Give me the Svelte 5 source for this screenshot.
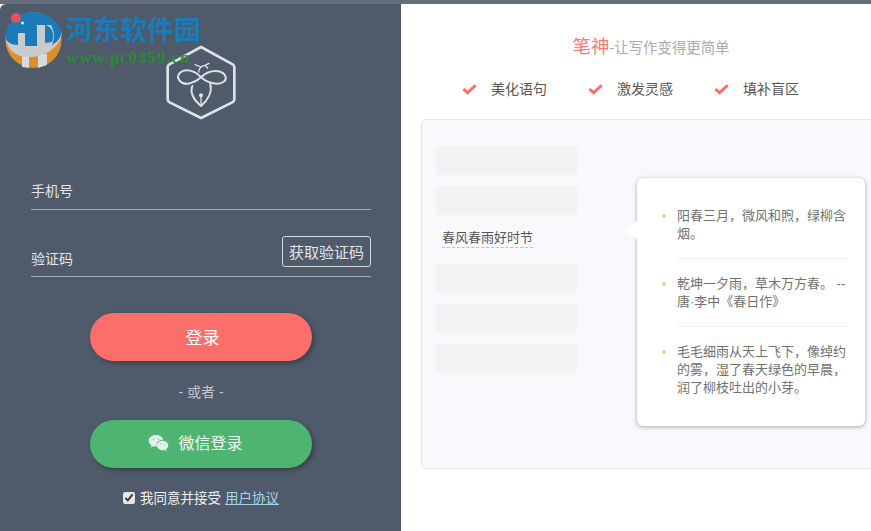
<script>
const features = ['美化语句', '激发灵感', '填补盲区'];
const rows = [
  { text: '' },
  { text: '' },
  { text: '春风春雨好时节' },
  { text: '' },
  { text: '' },
  { text: '' }
];
const tips = [
  '阳春三月，微风和煦，绿柳含烟。',
  '乾坤一夕雨，草木万方春。 --唐·李中《春日作》',
  '毛毛细雨从天上飞下，像绰约的雾，湿了春天绿色的早晨，润了柳枝吐出的小芽。'
];
</script>

<div class="page">
  <section class="login">
    <svg class="logo" viewBox="0 0 216 240" width="72" height="80" fill="none" stroke="#dfe1e4" stroke-linejoin="round" stroke-linecap="round">
      <path d="M108 15 L203 67 Q208 70 208 76 V172 Q208 178 202 181 L108 228 L14 181 Q8 178 8 172 V76 Q8 70 13 67 Z" stroke-width="8"/>
      <path d="M108 106 C90 85 60 78 45 92 C30 108 48 128 70 125 C85 122 98 115 108 106 C120 95 140 85 160 88 C180 92 190 110 175 120 C160 130 130 125 108 106 Z" stroke-width="6"/>
      <path d="M82 132 C75 150 85 172 108 192 C128 175 142 150 136 125" stroke-width="6"/>
      <path d="M108 162 V190" stroke-width="4"/>
      <circle cx="108" cy="160" r="6" fill="#dfe1e4" stroke="none"/>
      <path d="M101 90 C102 78 108 72 120 70 L132 64 M108 75 L90 68 M120 70 L128 78" stroke-width="4"/>
    </svg>

    <div class="field first"><span>手机号</span></div>
    <div class="field second">
      <span>验证码</span>
      <button class="code">获取验证码</button>
    </div>

    <button class="pill red">登录</button>
    <div class="or">- 或者 -</div>
    <button class="pill green">
      <svg viewBox="0 0 22 19" width="21" height="18" fill="#e4f1e8">
        <path d="M8.500 1C4 1 .6 3.800.6 7.200c0 2 1.100 3.600 3 4.800l-.8 2.300 2.700-1.400c1 .3 1.900.4 3 .4h.7a5.400 5.400 0 0 1-.2-1.500c0-3.200 2.900-5.700 6.500-5.700h.7C15.500 3.100 12.400 1 8.500 1z"/>
        <path d="M21.400 12.200c0-2.800-2.800-5-6-5s-6 2.200-6 5 2.800 5 6 5c.7 0 1.400-.1 2-.3l2.100 1.100-.6-1.800c1.500-1 2.500-2.400 2.500-4z"/>
        <g fill="#a5d8b6"><circle cx="5.800" cy="5.300" r="1"/><circle cx="11" cy="5.300" r="1"/><circle cx="13.300" cy="10.800" r=".8"/><circle cx="17.500" cy="10.800" r=".8"/></g>
      </svg>
      微信登录
    </button>
    <label class="agree">
      <input type="checkbox" checked />
      <span>我同意并接受</span> <a href="#agreement">用户协议</a>
    </label>
  </section>

  <section class="intro">
    <h1><em>笔神</em>-让写作变得更简单</h1>
    <ul class="features">
      {#each features as f}
        <li>
          <svg viewBox="0 0 16 12" width="15" height="12"><path d="M1.500 6 L6 10 L14.500 2" fill="none" stroke="#fb6e69" stroke-width="3.200"/></svg>
          {f}
        </li>
      {/each}
    </ul>

    <div class="demo">
      <div class="lines">
        {#each rows as r}
          {#if r.text}
            <div class="line-text"><span>{r.text}</span></div>
          {:else}
            <div class="line"></div>
          {/if}
        {/each}
      </div>
      <div class="pop">
        <ul>
          {#each tips as t}
            <li>{t}</li>
          {/each}
        </ul>
      </div>
    </div>
  </section>

  <div class="mark">
    <svg viewBox="0 0 58 56" width="58" height="56">
      <circle cx="28.500" cy="28" r="28" fill="#dd9029"/>
      <path d="M17 44 H24 V56 L17 55 Z M33 42 H42 V53 L33 56 Z" fill="#d8dade"/>
      <path d="M.6 26 C2 40 14 46 26 45 C42 44 56 34 56.800 21 L40 6 L8 12 Z" fill="#c9cbcf"/>
      <path d="M.6 27 C0 12 12 0 28.500 0 C42 0 53 9 56.500 20 C56 26 52 30 47 33 C50 26 49 18 46 13 L40 13 V33 H32 V13 L20 21 H13 V33 C6 33 3 30 .6 27 Z" fill="#1b7ab8"/>
      <path d="M40 13 C46 14 50 20 47 30 L40 31 Z" fill="#1b7ab8"/>
      <path d="M13 21 L20 21 L20 34 L13 34 Z" fill="#c9cbcf"/>
      <path d="M32 13 L40 13 L40 34 L32 34 Z" fill="#c9cbcf"/>
      <path d="M20 20 L27 14 L32 14 V34 L20 34 Z" fill="#1b7ab8"/>
      <circle cx="11" cy="6" r="5" fill="#e0525d"/>
      <circle cx="17.500" cy="11" r="1.500" fill="#e8e8ee"/>
    </svg>
    <div>
      <strong>河东软件园</strong>
      <small>www.pc0359.cn</small>
    </div>
  </div>
</div>

<style>
:global(body) { margin: 0; background: #fff; }
.page {
  position: relative;
  width: 871px;
  height: 531px;
  overflow: hidden;
  display: flex;
  box-sizing: border-box;
  border-top: 4px solid #666e7b;
  font-family: "Liberation Sans", "Noto Sans CJK SC", sans-serif;
}
.login {
  width: 401px;
  flex: none;
  box-sizing: border-box;
  background: #4f5a6a;
  border-top-left-radius: 6px;
  padding: 38px 30px 0 31px;
  display: flex;
  flex-direction: column;
  align-items: center;
  color: #e3e4e7;
  font-size: 14px;
}
.logo { flex: none; }
.field {
  align-self: stretch;
  box-sizing: border-box;
  border-bottom: 1px solid #a5abb3;
  display: flex;
  justify-content: space-between;
  align-items: flex-end;
}
.field span { line-height: 20px; }
.first { margin-top: 50px; height: 38px; padding-bottom: 8px; }
.second { margin-top: 27px; height: 40px; padding-bottom: 7px; }
.second .code { margin-bottom: 2px; }
.code {
  font: inherit;
  font-size: 15px;
  color: #e3e4e7;
  background: transparent;
  border: 1px solid #d5d8dc;
  border-radius: 3px;
  width: 89px;
  height: 31px;
  padding: 0;
}
.pill {
  width: 222px;
  height: 48px;
  flex: none;
  border: 0;
  border-radius: 24px;
  font: inherit;
  font-size: 16px;
  color: #fff;
  box-shadow: 2px 2px 4px rgba(30, 30, 30, 0.45);
  display: flex;
  align-items: center;
  justify-content: center;
  gap: 9px;
}
.red { background: #fb6e69; margin-top: 36px; padding: 0 0 2px 3px; font-size: 17px; }
.green { background: #4db571; color: #eef8f1; padding: 0 11px 5px 0; }
.green svg { margin-top: 3px; }
.or { margin: 21px 0 18px; font-size: 14px; line-height: 20px; color: #c3c6cb; }
.agree {
  margin-top: 21px;
  display: flex;
  align-items: center;
  font-size: 13.500px;
  color: #f1f2f3;
  gap: 4px;
  line-height: 20px;
}
.agree input { margin: 0 1px 3px 0; width: 12px; height: 12px; accent-color: #e6e6e6; }
.agree a { color: #a5d6ea; }
.intro {
  flex: 1;
  min-width: 0;
  padding: 28px 0 0 20px;
  color: #555;
}
h1 {
  margin: 0;
  text-align: center;
  font-weight: 400;
  font-size: 14.400px;
  color: #aaa;
  padding-left: 10px;
  line-height: 30px;
}
h1 em { font-style: normal; font-size: 18.500px; color: #fb7a75; }
.features {
  list-style: none;
  margin: 16px 0 0 41px;
  padding: 0;
  display: flex;
  font-size: 14px;
  line-height: 20px;
}
.features li { width: 126px; display: flex; align-items: center; gap: 14px; }
.demo {
  margin-top: 20px;
  width: 480px;
  height: 350px;
  box-sizing: border-box;
  background: #f9f9fd;
  border: 1px solid #e6e6ea;
  border-radius: 6px;
  padding: 26px 0 0 14px;
  display: flex;
  align-items: flex-start;
}
.lines { width: 141px; display: flex; flex-direction: column; gap: 11px; flex: none; }
.line { height: 29px; background: #f3f3f4; }
.line-text { height: 27px; padding-left: 6px; font-size: 13px; color: #555; }
.line-text span {
  display: inline-block;
  margin-top: 2px;
  line-height: 19px;
  border-bottom: 1px dashed #8fd6ca;
}
.pop {
  position: relative;
  margin: 32px 0 0 60px;
  width: 228px;
  height: 248px;
  box-sizing: border-box;
  background: #fff;
  border-radius: 6px;
  box-shadow: 0 1px 4px rgba(90, 90, 100, 0.55);
  padding: 29px 17px 0 40px;
}
.pop::before {
  content: "";
  position: absolute;
  left: -14px;
  top: 43px;
  border-style: solid;
  border-width: 9px 14px 9px 0;
  border-color: transparent #fff transparent transparent;
}
.pop ul { list-style: none; margin: 0; padding: 0; }
.pop li {
  position: relative;
  font-size: 13px;
  line-height: 18px;
  color: #717171;
  padding-bottom: 15px;
  margin-bottom: 16px;
  border-bottom: 1px solid #f0f0f0;
}
.pop li:last-child { border-bottom: 0; }
.pop li::before {
  content: "";
  position: absolute;
  left: -15px;
  top: 7px;
  width: 4px;
  height: 4px;
  border-radius: 50%;
  background: #f5c98b;
}
.mark {
  position: absolute;
  left: 5px;
  top: 8px;
  display: flex;
  gap: 3px;
  pointer-events: none;
}
.mark div { display: flex; flex-direction: column; font-family: "Liberation Serif", "Noto Sans CJK SC", serif; margin-top: -1px; }
.mark strong { font-family: "Noto Sans CJK SC", sans-serif; font-size: 27px; line-height: 36px; color: #1b7ab8; font-weight: 700; }
.mark small { font-size: 17px; font-weight: 700; line-height: 18px; letter-spacing: 0.9px; color: #2c8a3a; margin-top: 2px; }
</style>
